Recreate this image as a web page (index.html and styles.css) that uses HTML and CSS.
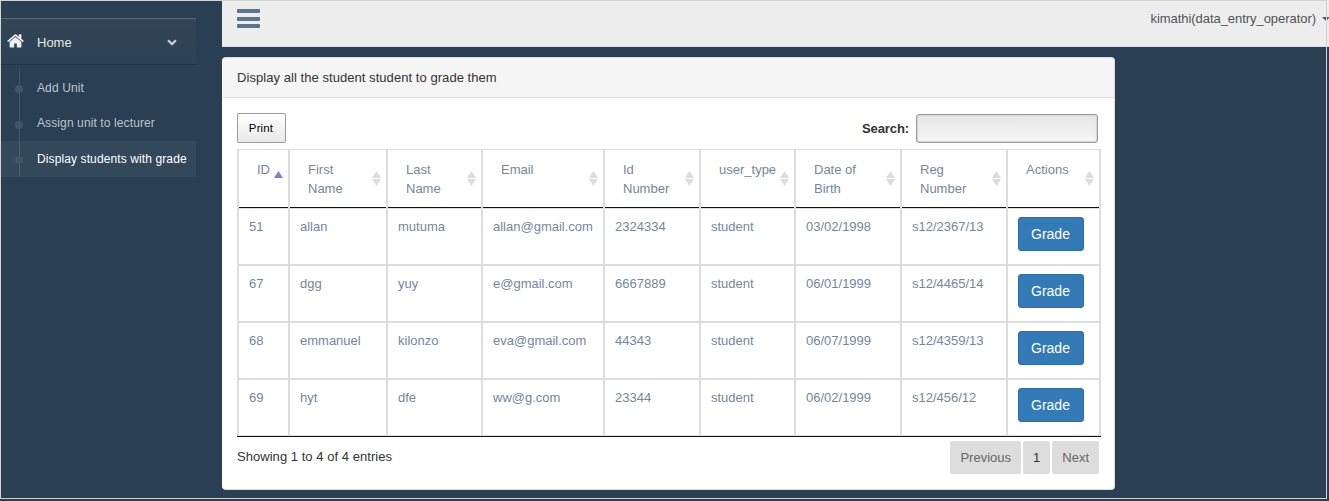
FILE: index.html
```html
<!DOCTYPE html>
<html lang="en">
<head>
<meta charset="utf-8">
<title>Grade students</title>
<link rel="stylesheet" href="styles.css">
</head>
<body>
<div class="app">
  <aside class="sidebar">
    <div class="menu-head">
      <svg class="home" viewBox="0 0 1664 1312"><path d="M1408 768v480q0 26-19 45t-45 19H960V928H704v384H320q-26 0-45-19t-19-45V768q0-1 .5-3t.5-3l575-474 575 474q1 2 1 6zm223-69l-62 74q-8 9-21 11h-3q-13 0-21-7L832 200 140 777q-12 8-24 7-13-2-21-11l-62-74q-8-10-7-23.500t11-21.500L756 55q32-26 76-26t76 26l244 204V64q0-14 9-23t23-9h192q14 0 23 9t9 23v408l219 182q10 8 11 21.500t-7 23.500z"/></svg>
      <span>Home</span>
      <svg class="chev" viewBox="0 0 10 7"><path d="M1.100 1.200L5 5.100l3.900-3.900" fill="none" stroke="currentColor" stroke-width="2.300"/></svg>
    </div>
    <ul class="tree">
      <li class="first">Add Unit</li>
      <li>Assign unit to lecturer</li>
      <li class="active">Display students with grade</li>
    </ul>
  </aside>
  <main class="main">
    <header class="topbar">
      <div class="bars"><i></i><i></i><i></i></div>
      <div class="user">kimathi(data_entry_operator)<b class="caret"></b></div>
    </header>
    <section class="panel">
      <div class="panel-head">Display all the student student to grade them</div>
      <div class="panel-body">
        <div class="tools">
          <button class="print">Print</button>
          <label class="search">Search:<input type="text"></label>
        </div>
        <table class="grid">
          <colgroup><col class="c1"><col class="c2"><col class="c3"><col class="c4"><col class="c5"><col class="c6"><col class="c7"><col class="c8"><col class="c9"></colgroup>
          <thead><tr><th class="asc">ID</th><th>First<br>Name</th><th>Last<br>Name</th><th>Email</th><th>Id<br>Number</th><th>user_type</th><th>Date of<br>Birth</th><th>Reg<br>Number</th><th>Actions</th></tr></thead>
          <tbody>
            <tr><td>51</td><td>allan</td><td>mutuma</td><td>allan@gmail.com</td><td>2324334</td><td>student</td><td>03/02/1998</td><td>s12/2367/13</td><td><button class="grade">Grade</button></td></tr>
            <tr><td>67</td><td>dgg</td><td>yuy</td><td>e@gmail.com</td><td>6667889</td><td>student</td><td>06/01/1999</td><td>s12/4465/14</td><td><button class="grade">Grade</button></td></tr>
            <tr><td>68</td><td>emmanuel</td><td>kilonzo</td><td>eva@gmail.com</td><td>44343</td><td>student</td><td>06/07/1999</td><td>s12/4359/13</td><td><button class="grade">Grade</button></td></tr>
            <tr><td>69</td><td>hyt</td><td>dfe</td><td>ww@g.com</td><td>23344</td><td>student</td><td>06/02/1999</td><td>s12/456/12</td><td><button class="grade">Grade</button></td></tr>
          </tbody>
        </table>
        <div class="foot">
          <div class="info">Showing 1 to 4 of 4 entries</div>
          <div class="pages"><span>Previous</span><span class="current">1</span><span>Next</span></div>
        </div>
      </div>
    </section>
  </main>
  <div class="frame"></div>
</div>
</body>
</html>
```
FILE: styles.css
```css
* { box-sizing: border-box; }
body {
  margin: 0;
  background: #2a3f54;
  color: #333;
  font: 13px/19px "Liberation Sans", Arial, sans-serif;
  overflow: hidden;
}
.app { position: relative; display: flex; width: 1329px; height: 501px; }
.frame {
  position: absolute; top: 0; left: 0; width: 1327px; height: 499px;
  border: 1px solid #d3d3d3; pointer-events: none;
}

.sidebar { width: 222px; padding: 18px 26px 0 0; }
.menu-head {
  display: flex; align-items: center; height: 47px; padding: 2px 19px 0 7px;
  color: #e7e7e7;
  border-top: 1px solid #566676; border-bottom: 1px solid #233446;
  background: linear-gradient(#334556, #2c4257);
}
.home { width: 17px; height: 13.400px; fill: #ecf0f1; margin: -3px 13px 0 0; }
.chev { width: 10px; height: 7px; margin: -1px 0 0 auto; color: #c4cfda; }
.tree {
  list-style: none; margin: 5px 0 0; padding: 0;
  font-size: 12px; letter-spacing: .11px; color: #bdc4cb;
  background: linear-gradient(#425668, #425668) 19px 0 / 1px 100% no-repeat;
}
.tree li { display: flex; align-items: center; height: 35px; padding-left: 15px; }
.tree li::before { content: ""; width: 8px; height: 8px; margin: 2px 14px 0 0; border-radius: 50%; background: #425668; }
.tree .first { height: 36px; }
.tree .first::before { margin-top: 1px; }
.tree .active { height: 36px; color: #fff; background: rgba(255,255,255,.05); }

.main { width: 1107px; }
.topbar {
  display: flex; justify-content: space-between; height: 47px;
  padding: 9px 0 0 15px; background: #ededed; border-bottom: 1px solid #d9dee4;
}
.bars { display: flex; flex-direction: column; justify-content: space-between; width: 23px; height: 19px; }
.bars i { height: 4px; border-radius: 1px; background: #5a738e; }
.user { display: flex; color: #515356; letter-spacing: -.05px; }
.caret { width: 8px; height: 4px; margin: 8px 0 0 6px; border: 4px solid transparent; border-top-color: #515356; border-bottom: 0; }
.user .caret { margin-right: -1px; }

.panel {
  width: 893px; height: 433px; margin-top: 10px;
  border: 1px solid #ddd; border-left-color: #fff; border-radius: 4px; background: #fff; overflow: hidden;
}
.panel-head { height: 40px; padding: 10px 14px; letter-spacing: .055px; background: #f5f5f5; border-bottom: 1px solid #ddd; }
.panel-body { padding: 15px 13px 0 14px; }
.tools { display: flex; justify-content: space-between; height: 36px; padding-right: 3px; }
.print {
  width: 49px; height: 30px; padding: 0 1px 0 0; border: 1px solid #999; border-radius: 2px;
  background: linear-gradient(#fff, #e9e9e9); color: #000; letter-spacing: .15px;
  font: 11.440px "Liberation Sans", Arial, sans-serif;
}
.search { display: flex; align-items: center; height: 30px; font-weight: bold; letter-spacing: -.1px; }
.search input {
  width: 182px; height: 29px; margin: 1px 0 0 7px;
  border: 1px solid #999; border-radius: 3px; box-shadow: inset 0 0 1px 1px #d5d5d5;
  background: linear-gradient(#e6e6e6, #f5f5f5);
}

.grid { width: 864px; table-layout: fixed; border-collapse: separate; border-spacing: 0; border-bottom: 1px solid #111; color: #73879c; }
.c1 { width: 53px; } .c2 { width: 98px; } .c3 { width: 95px; }
.c4 { width: 122px; } .c5 { width: 96px; } .c6 { width: 95px; }
.c7, .c8 { width: 106px; } .c9 { width: 93px; }
.grid th, .grid td { vertical-align: top; text-align: left; border-right: 2px solid #ddd; }
.grid th:first-child, .grid td:first-child { border-left: 2px solid #ddd; }
.grid th {
  position: relative; height: 59px; padding: 10px 0 0 18px; font-weight: normal;
  border-top: 1px solid #ddd; box-shadow: inset 0 -1px #111;
}
.grid th::before, .grid th::after {
  content: ""; position: absolute; right: 5px; width: 9px; height: 7px; background: #dcdcdc;
}
.grid th::before { top: 21px; clip-path: polygon(50% 0, 100% 100%, 0 100%); }
.grid th::after { top: 29px; clip-path: polygon(0 0, 100% 0, 50% 100%); }
.grid th.asc::before { background: #7b80de; }
.grid th.asc::after { display: none; }
.grid td { height: 57px; padding: 8px 0 0 10px; border-bottom: 2px solid #ddd; }
.grid tr:first-child td { height: 58px; border-top: 1px solid #ddd; }
.grid tr:last-child td { height: 56px; border-bottom-width: 1px; }
.grade {
  display: block; width: 66px; height: 34px; padding: 0 1px 0 0; border: 1px solid #2e6da4; border-radius: 3px;
  background: #337ab7; color: #fff; font: 14px "Liberation Sans", Arial, sans-serif;
}
.foot { display: flex; justify-content: space-between; padding: 4px 2px 0 0; }
.info { padding-top: 6px; letter-spacing: .04px; }
.pages { display: flex; gap: 2px; }
.pages span { height: 33px; padding: 7px 10px; border-radius: 2px; background: #ddd; color: #666; }
.pages .current { color: #333; }
```
